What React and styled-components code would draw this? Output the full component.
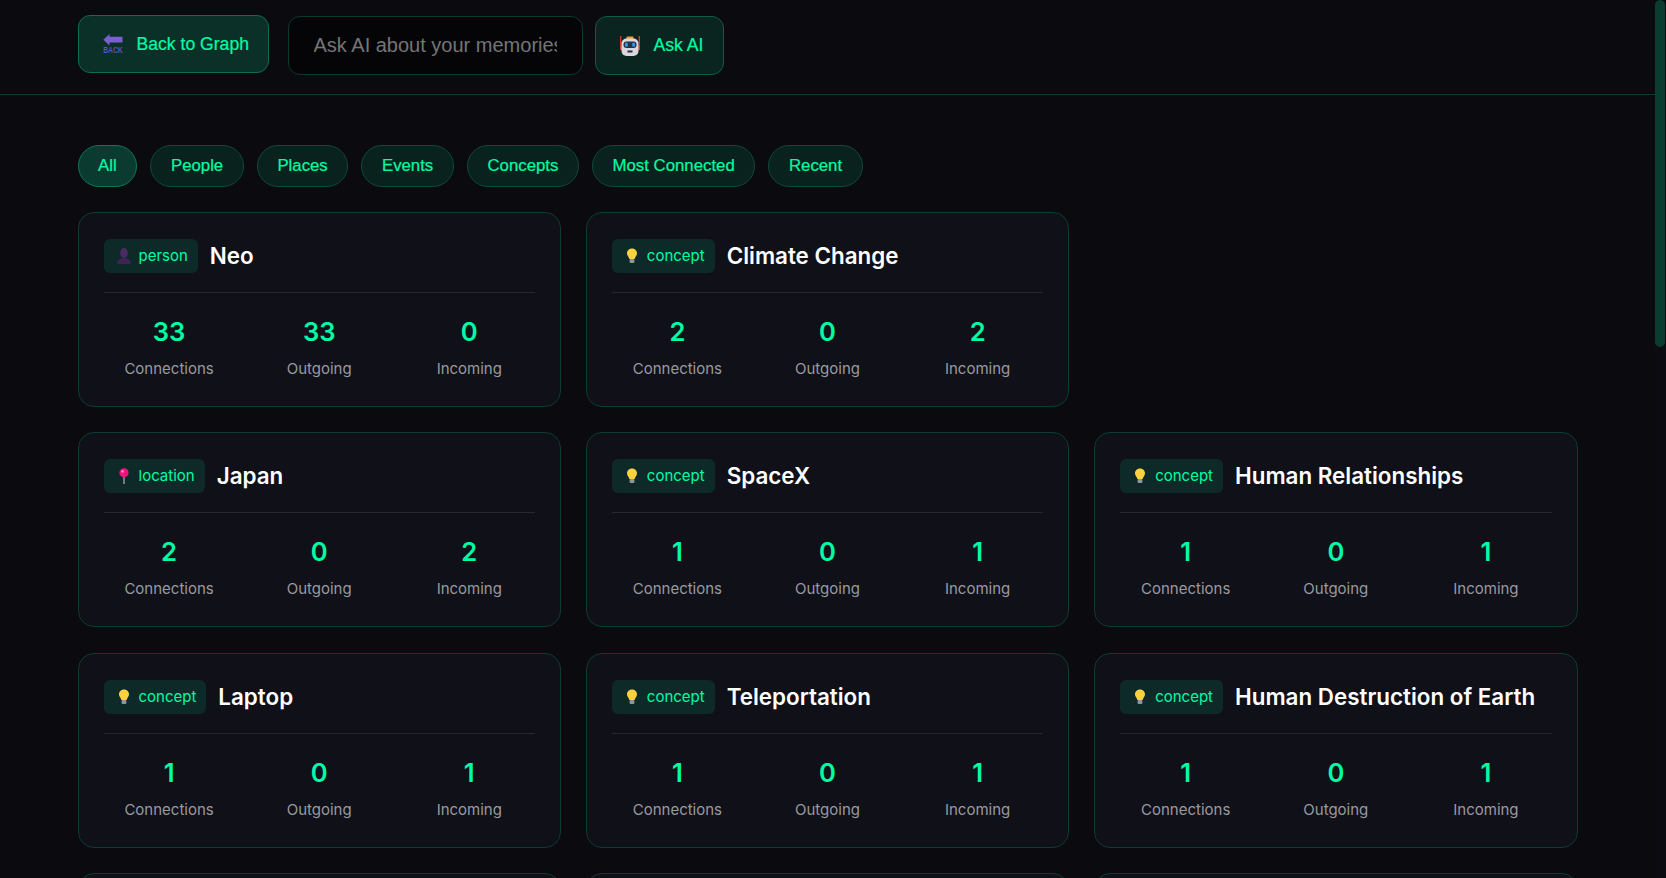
import React from "react";
import styled, { createGlobalStyle } from "styled-components";

const accent = "#00fca4";
const controlFont = `"Liberation Sans", Arial, sans-serif`;

const Global = createGlobalStyle`
  * { box-sizing: border-box; }
  html, body { height: 100%; overflow: hidden; }
  body { margin: 0; background: #0a0a0f; color: #fff; font-family: Inter, "Noto Sans", sans-serif; line-height: 1.6; }
`;

const Shell = styled.div`
  display: flex;
  height: 100vh;
`;
const Page = styled.div`
  flex: 1;
  min-width: 0;
  overflow: hidden;
`;
const ScrollRail = styled.div`
  flex: none;
  width: 11px;
  background: #0b0b11;
`;
const ScrollThumb = styled.div`
  width: 10px;
  height: 347px;
  background: #0a3d2f;
  border-radius: 5px;
`;

const Header = styled.header`
  height: 95px;
  border-bottom: 1px solid #0c3a2d;
`;
const Bar = styled.div`
  max-width: 1500px;
  margin: 0 auto;
  padding-top: 15px;
  display: flex;
  align-items: flex-start;
  gap: 12px;
`;
const BaseButton = styled.button`
  display: flex;
  align-items: center;
  gap: 10px;
  padding: 0 20px;
  font-family: ${controlFont};
  font-size: 17.6px;
  white-space: nowrap;
  -webkit-text-stroke: 0.2px ${accent};
  color: ${accent};
  border-radius: 12px;
  cursor: pointer;
`;
const BackButton = styled(BaseButton)`
  height: 58px;
  width: 191px;
  margin-right: 7px;
  background: #0a3028;
  border: 1px solid #0f6b52;
`;
const AskButton = styled(BaseButton)`
  height: 59px;
  width: 129px;
  margin-top: 1px;
  background: #0a2420;
  border: 1px solid #0d5c47;
`;
const AskInput = styled.input`
  width: 295px;
  height: 59px;
  margin-top: 1px;
  padding: 0 25px;
  background: #050508;
  border: 1px solid #0b3a2e;
  border-radius: 12px;
  color: #fff;
  font-family: ${controlFont};
  font-size: 20px;
  outline: none;
  &::placeholder { color: #757575; }
`;
const IconSlot = styled.span`
  width: ${p => p.$w}px;
  display: flex;
  align-items: center;
  justify-content: center;
  flex: none;
`;
const Main = styled.main`
  max-width: 1500px;
  margin: 0 auto;
  padding: 50px 0 40px;
`;
const Filters = styled.nav`
  display: flex;
  gap: 13px;
  margin-bottom: 25px;
`;
const Pill = styled.button`
  height: 42px;
  padding: 0 19.6px;
  border-radius: 21px;
  font-family: ${controlFont};
  font-size: 16.8px;
  white-space: nowrap;
  -webkit-text-stroke: 0.2px ${accent};
  color: ${accent};
  background: ${p => (p.$active ? "#0b3b30" : "#0a221e")};
  border: 1px solid ${p => (p.$active ? "#0f7558" : "#0c4a3a")};
  cursor: pointer;
`;
const Grid = styled.section`
  display: grid;
  grid-template-columns: repeat(3, 1fr);
  column-gap: 25px;
  row-gap: 25.6px;
`;
const EmptyCell = styled.div``;
const Card = styled.article`
  padding: 25px;
  background: #0f1018;
  border: 1px solid #0c3d30;
  border-radius: 16px;
`;
const CardHead = styled.div`
  display: flex;
  align-items: center;
  gap: 12px;
  padding-bottom: 18px;
  border-bottom: 1px solid #262830;
`;
const Badge = styled.span`
  display: flex;
  align-items: center;
  gap: 5px;
  height: 34px;
  padding: 0 10px;
  background: #0e2a28;
  border-radius: 6px;
  color: ${accent};
  font-size: 15px;
  flex: none;
`;
const Title = styled.h3`
  margin: 0;
  font-size: 22.4px;
  font-weight: 600;
  color: #fff;
  white-space: nowrap;
`;
const Stats = styled.div`
  display: grid;
  grid-template-columns: repeat(3, 1fr);
  gap: 19px;
  padding-top: 20px;
  text-align: center;
`;
const Stat = styled.div``;
const StatValue = styled.div`
  font-size: 25.6px;
  line-height: 38px;
  font-weight: 600;
  color: ${accent};
`;
const StatLabel = styled.div`
  margin-top: 6px;
  font-size: 15px;
  color: #9a9aa0;
`;

const BackIcon = () => (
  <svg width="20" height="20" viewBox="0 0 20 20">
    <path d="M0.3 5.7 L6.5 0 V2.8 H19.5 V8.6 H6.5 V11.4 Z" fill="#7a5fd0" />
    <text x="10" y="19.4" textAnchor="middle" fontSize="9.5" fontWeight="700" fontFamily="Liberation Sans, sans-serif" fill="#6350b8" textLength="19.5" lengthAdjust="spacingAndGlyphs">BACK</text>
  </svg>
);
const RobotIcon = () => (
  <svg width="20" height="20" viewBox="0 0 20 20">
    <rect x="0" y="0" width="1.4" height="14" fill="#d0392e" />
    <rect x="18.6" y="0" width="1.4" height="14" fill="#d0392e" />
    <rect x="0" y="10" width="3" height="4" fill="#d0392e" />
    <rect x="17" y="10" width="3" height="4" fill="#d0392e" />
    <rect x="6.5" y="0.5" width="7" height="3" rx="1" fill="#f0a030" />
    <rect x="1.5" y="2.5" width="17" height="17.5" rx="5" fill="#d8d6de" />
    <rect x="3.5" y="5.5" width="13" height="6.5" rx="3" fill="#2a3140" />
    <rect x="5" y="6.8" width="2.8" height="4" rx="1" fill="#2a9fe8" />
    <rect x="12.2" y="6.8" width="2.8" height="4" rx="1" fill="#2a9fe8" />
    <rect x="7.5" y="14.5" width="5" height="2" fill="#2a2a32" />
  </svg>
);
const PersonIcon = () => (
  <svg width="16" height="16" viewBox="0 0 16 16">
    <ellipse cx="8" cy="5" rx="3.8" ry="5" fill="#4a2a63" />
    <path d="M1 16 C1 12 4 11 6 10 H10 C12 11 15 12 15 16 Z" fill="#3d2455" />
  </svg>
);
const PinIcon = () => (
  <svg width="16" height="16" viewBox="0 0 16 16">
    <rect x="7.3" y="8" width="1.4" height="8" fill="#9aa0a6" />
    <circle cx="8" cy="4.8" r="4.6" fill="#f0127f" />
    <circle cx="6.6" cy="3.4" r="1.2" fill="#ff9ccb" />
  </svg>
);
const BulbIcon = () => (
  <svg width="16" height="16" viewBox="0 0 16 16">
    <path d="M8 0.5 C5 0.5 3 2.7 3 5.3 C3 7.4 4.6 8.6 5.4 11 H10.6 C11.4 8.6 13 7.4 13 5.3 C13 2.7 11 0.5 8 0.5 Z" fill="#fbd13d" />
    <rect x="5.6" y="11" width="4.8" height="4" rx="1" fill="#8d95a0" />
  </svg>
);
const kindIcons = { person: PersonIcon, location: PinIcon, concept: BulbIcon };

const pills = ["All", "People", "Places", "Events", "Concepts", "Most Connected", "Recent"];

const entities = [
  ["person", "Neo", 33, 33, 0],
  ["concept", "Climate Change", 2, 0, 2],
  null,
  ["location", "Japan", 2, 0, 2],
  ["concept", "SpaceX", 1, 0, 1],
  ["concept", "Human Relationships", 1, 0, 1],
  ["concept", "Laptop", 1, 0, 1],
  ["concept", "Teleportation", 1, 0, 1],
  ["concept", "Human Destruction of Earth", 1, 0, 1],
  ["concept", "Robotics", 1, 0, 1],
  ["concept", "Mars", 1, 0, 1],
  ["concept", "Electric Cars", 1, 0, 1],
];

const EntityCard = ({ kind, name, total, out, inc }) => {
  const Icon = kindIcons[kind];
  return (
    <Card>
      <CardHead>
        <Badge>
          <IconSlot $w={20}><Icon /></IconSlot>
          {kind}
        </Badge>
        <Title>{name}</Title>
      </CardHead>
      <Stats>
        <Stat><StatValue>{total}</StatValue><StatLabel>Connections</StatLabel></Stat>
        <Stat><StatValue>{out}</StatValue><StatLabel>Outgoing</StatLabel></Stat>
        <Stat><StatValue>{inc}</StatValue><StatLabel>Incoming</StatLabel></Stat>
      </Stats>
    </Card>
  );
};

export default function App() {
  return (
    <Shell>
      <Global />
      <Page>
        <Header>
          <Bar>
            <BackButton><IconSlot $w={28}><BackIcon /></IconSlot>Back to Graph</BackButton>
            <AskInput placeholder="Ask AI about your memories..." />
            <AskButton><IconSlot $w={28}><RobotIcon /></IconSlot>Ask AI</AskButton>
          </Bar>
        </Header>
        <Main>
          <Filters>
            {pills.map((p, i) => <Pill key={p} $active={i === 0}>{p}</Pill>)}
          </Filters>
          <Grid>
            {entities.map((e, i) =>
              e ? <EntityCard key={e[1]} kind={e[0]} name={e[1]} total={e[2]} out={e[3]} inc={e[4]} /> : <EmptyCell key={i} />
            )}
          </Grid>
        </Main>
      </Page>
      <ScrollRail><ScrollThumb /></ScrollRail>
    </Shell>
  );
}
